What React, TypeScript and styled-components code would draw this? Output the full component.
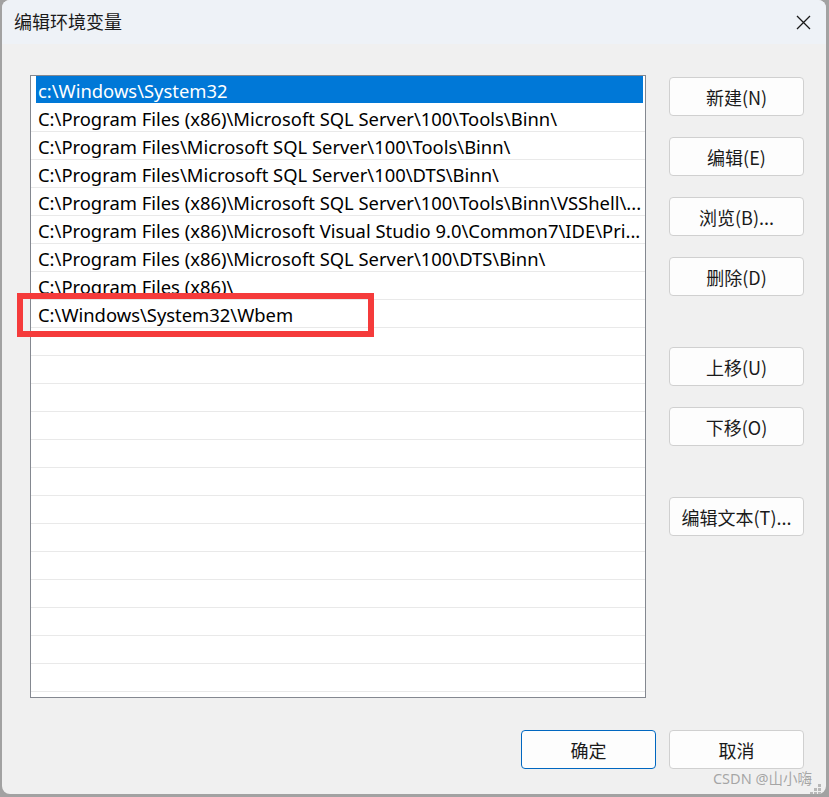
import React from "react";
import styled, { createGlobalStyle } from "styled-components";

const Global = createGlobalStyle`
  html, body { margin: 0; padding: 0; }
  body {
    background: #a2a2a2;
    font-family: "Noto Sans", "Noto Sans CJK SC", sans-serif;
    overflow: hidden;
  }
`;

const Page = styled.div`
  width: 829px;
  height: 797px;
  display: flex;
  align-items: flex-start;
  padding-left: 2px;
  box-sizing: border-box;
`;

const Dialog = styled.div`
  position: relative;
  width: 824px;
  height: 794px;
  background: #f0f0f0;
  border-radius: 8px;
  overflow: hidden;
  display: flex;
  flex-direction: column;
  box-sizing: border-box;
`;

const TitleBar = styled.div`
  height: 44px;
  flex: none;
  background: #eef2f7;
  display: flex;
  align-items: center;
  justify-content: space-between;
  padding: 0 15px 0 12px;
`;

const Title = styled.div`
  font-family: "Noto Sans CJK SC", sans-serif;
  font-size: 18px;
  color: #1a1a1a;
  padding-bottom: 2px;
`;

const CloseButton = styled.div`
  width: 16px;
  height: 16px;
  display: flex;
  align-items: center;
  justify-content: center;
`;

const Body = styled.div`
  flex: 1;
  display: flex;
  flex-direction: column;
  padding: 31px 22px 0 28px;
`;

const Main = styled.div`
  display: flex;
  gap: 23px;
`;

const List = styled.div`
  width: 616px;
  height: 623px;
  box-sizing: border-box;
  border: 1px solid #848890;
  background: #ffffff;
  overflow: hidden;
  display: flex;
  flex-direction: column;
`;

const Row = styled.div<{ $selected?: boolean }>`
  height: 28px;
  flex: none;
  box-sizing: border-box;
  border-bottom: 1px solid ${(p) => (p.$selected ? "transparent" : "#e9e9e9")};
  display: flex;
  align-items: center;
  padding-left: 5px;
  padding-right: 2px;
`;

const RowText = styled.div<{ $selected?: boolean }>`
  flex: 1;
  height: 100%;
  display: flex;
  align-items: center;
  padding-left: 2px;
  padding-top: 1px;
  box-sizing: border-box;
  background: ${(p) => (p.$selected ? "#0078d7" : "transparent")};
  color: ${(p) => (p.$selected ? "#ffffff" : "#000000")};
  font-family: "Noto Sans", sans-serif;
  font-size: 18.4px;
  white-space: nowrap;
  overflow: hidden;
`;

const Side = styled.div`
  display: flex;
  flex-direction: column;
  padding-top: 2px;
  gap: 21px;
`;

const Button = styled.div<{ $spaced?: boolean; $primary?: boolean }>`
  width: 135px;
  height: 39px;
  box-sizing: border-box;
  border: 1px solid ${(p) => (p.$primary ? "#0067c0" : "#d0d0d0")};
  border-radius: 4px;
  background: #fdfdfd;
  display: flex;
  align-items: center;
  justify-content: center;
  font-family: "Noto Sans CJK SC", sans-serif;
  font-size: 18px;
  color: #1a1a1a;
  margin-top: ${(p) => (p.$spaced ? "30px" : "0")};
`;

const Footer = styled.div`
  display: flex;
  justify-content: flex-end;
  gap: 13px;
  margin-top: 32px;
`;

const Highlight = styled.div`
  position: absolute;
  left: 15px;
  top: 293px;
  width: 357px;
  height: 44px;
  box-sizing: border-box;
  border: 6px solid #f53b3b;
  pointer-events: none;
`;

const Watermark = styled.div`
  position: absolute;
  right: 14px;
  bottom: 6px;
  font-family: "Noto Sans", "Noto Sans CJK SC", sans-serif;
  font-size: 14.5px;
  color: rgba(140, 140, 140, 0.75);
`;

const Grip = styled.div`
  position: absolute;
  right: 4px;
  bottom: 3px;
  width: 12px;
  height: 12px;
`;

const rows = [
  "c:\\Windows\\System32",
  "C:\\Program Files (x86)\\Microsoft SQL Server\\100\\Tools\\Binn\\",
  "C:\\Program Files\\Microsoft SQL Server\\100\\Tools\\Binn\\",
  "C:\\Program Files\\Microsoft SQL Server\\100\\DTS\\Binn\\",
  "C:\\Program Files (x86)\\Microsoft SQL Server\\100\\Tools\\Binn\\VSShell\\...",
  "C:\\Program Files (x86)\\Microsoft Visual Studio 9.0\\Common7\\IDE\\Pri...",
  "C:\\Program Files (x86)\\Microsoft SQL Server\\100\\DTS\\Binn\\",
  "C:\\Program Files (x86)\\",
  "C:\\Windows\\System32\\Wbem",
];

const TOTAL_ROWS = 23;

export default function App() {
  const all = [...rows, ...Array(TOTAL_ROWS - rows.length).fill("")];
  return (
    <>
      <Global />
      <Page>
        <Dialog>
          <TitleBar>
            <Title>编辑环境变量</Title>
            <CloseButton>
              <svg width="15" height="15" viewBox="0 0 15 15">
                <path d="M1 1 L14 14 M14 1 L1 14" stroke="#1a1a1a" strokeWidth="1.3" fill="none" />
              </svg>
            </CloseButton>
          </TitleBar>
          <Body>
            <Main>
              <List>
                {all.map((t, i) => (
                  <Row key={i} $selected={i === 0}>
                    <RowText $selected={i === 0}>{t}</RowText>
                  </Row>
                ))}
              </List>
              <Side>
                <Button>新建(N)</Button>
                <Button>编辑(E)</Button>
                <Button>浏览(B)...</Button>
                <Button>删除(D)</Button>
                <Button $spaced>上移(U)</Button>
                <Button>下移(O)</Button>
                <Button $spaced>编辑文本(T)...</Button>
              </Side>
            </Main>
            <Footer>
              <Button $primary>确定</Button>
              <Button>取消</Button>
            </Footer>
          </Body>
          <Highlight />
          <Watermark>CSDN @山小嗨</Watermark>
          <Grip>
            <svg width="12" height="12" viewBox="0 0 12 12">
              <rect x="8" y="0" width="3" height="3" fill="#b8b8b8" />
              <rect x="4" y="4" width="3" height="3" fill="#b8b8b8" />
              <rect x="8" y="4" width="3" height="3" fill="#b8b8b8" />
              <rect x="0" y="8" width="3" height="3" fill="#b8b8b8" />
              <rect x="4" y="8" width="3" height="3" fill="#b8b8b8" />
              <rect x="8" y="8" width="3" height="3" fill="#b8b8b8" />
            </svg>
          </Grip>
        </Dialog>
      </Page>
    </>
  );
}
